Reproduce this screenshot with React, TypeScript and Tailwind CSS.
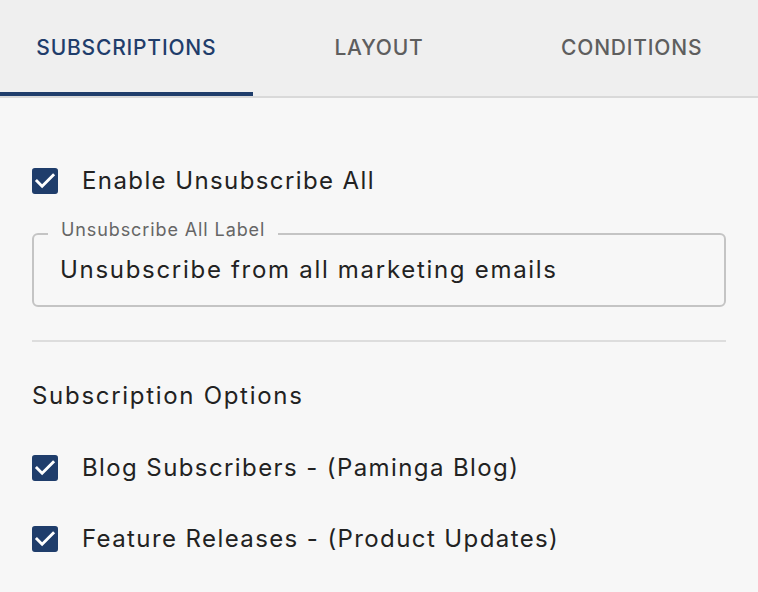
import React from "react";

const font = { fontFamily: 'Inter, "Open Sans", "Liberation Sans", sans-serif' };

function Check() {
  return (
    <svg width="26" height="26" viewBox="3 3 18 18" className="shrink-0">
      <rect x="3" y="3" width="18" height="18" rx="2" fill="#1f3d6b" />
      <path d="M10 17l-5-5 1.41-1.41L10 14.17l7.59-7.59L19 8l-9 9z" fill="#ffffff" />
    </svg>
  );
}

function Row({ label }: { label: string }) {
  return (
    <div className="flex h-[40px] items-center">
      <Check />
      <span className="ml-[24px] text-[24px] leading-[32px] text-[#222222] tracking-[1.4px]">{label}</span>
    </div>
  );
}

export default function App() {
  const tabs = ["SUBSCRIPTIONS", "LAYOUT", "CONDITIONS"];
  return (
    <div style={font} className="w-[758px] h-[592px] bg-[#f7f7f7] overflow-hidden">
      <div className="flex h-[98px] bg-[#efefef] border-b-2 border-[#d9d9d9]">
        {tabs.map((t, i) => (
          <div key={t} className="flex flex-1 flex-col">
            <div
              className={
                "flex flex-1 items-center justify-center pt-[4px] text-[21px] font-medium tracking-[0.8px] " +
                (i === 0 ? "text-[#1f3d6b]" : "text-[#5e5e5e]")
              }
            >
              {t}
            </div>
            <div className={i === 0 ? "h-[4px] bg-[#1f3d6b]" : "h-[4px]"} />
          </div>
        ))}
      </div>
      <div className="px-[32px]">
        <div className="mt-[63px]">
          <Row label="Enable Unsubscribe All" />
        </div>
        <fieldset className="mt-[23px] rounded-[6px] border-2 border-[#c4c4c4] pl-[14px]">
          <legend className="px-[13px] text-[18px] leading-[20px] text-[#666666] tracking-[0.9px]">
            <span className="block -translate-y-[4px]">Unsubscribe All Label</span>
          </legend>
          <div className="ml-[12px] pt-[10px] pb-[19px] text-[24px] leading-[32px] text-[#222222] tracking-[1.7px]">
            Unsubscribe from all marketing emails
          </div>
        </fieldset>
        <div className="mt-[33px] h-[2px] bg-[#dddddd]" />
        <div className="mt-[38px] text-[24px] leading-[32px] text-[#222222] tracking-[1.7px]">
          Subscription Options
        </div>
        <div className="mt-[36px]">
          <Row label="Blog Subscribers - (Paminga Blog)" />
        </div>
        <div className="mt-[31px]">
          <Row label="Feature Releases - (Product Updates)" />
        </div>
      </div>
    </div>
  );
}
